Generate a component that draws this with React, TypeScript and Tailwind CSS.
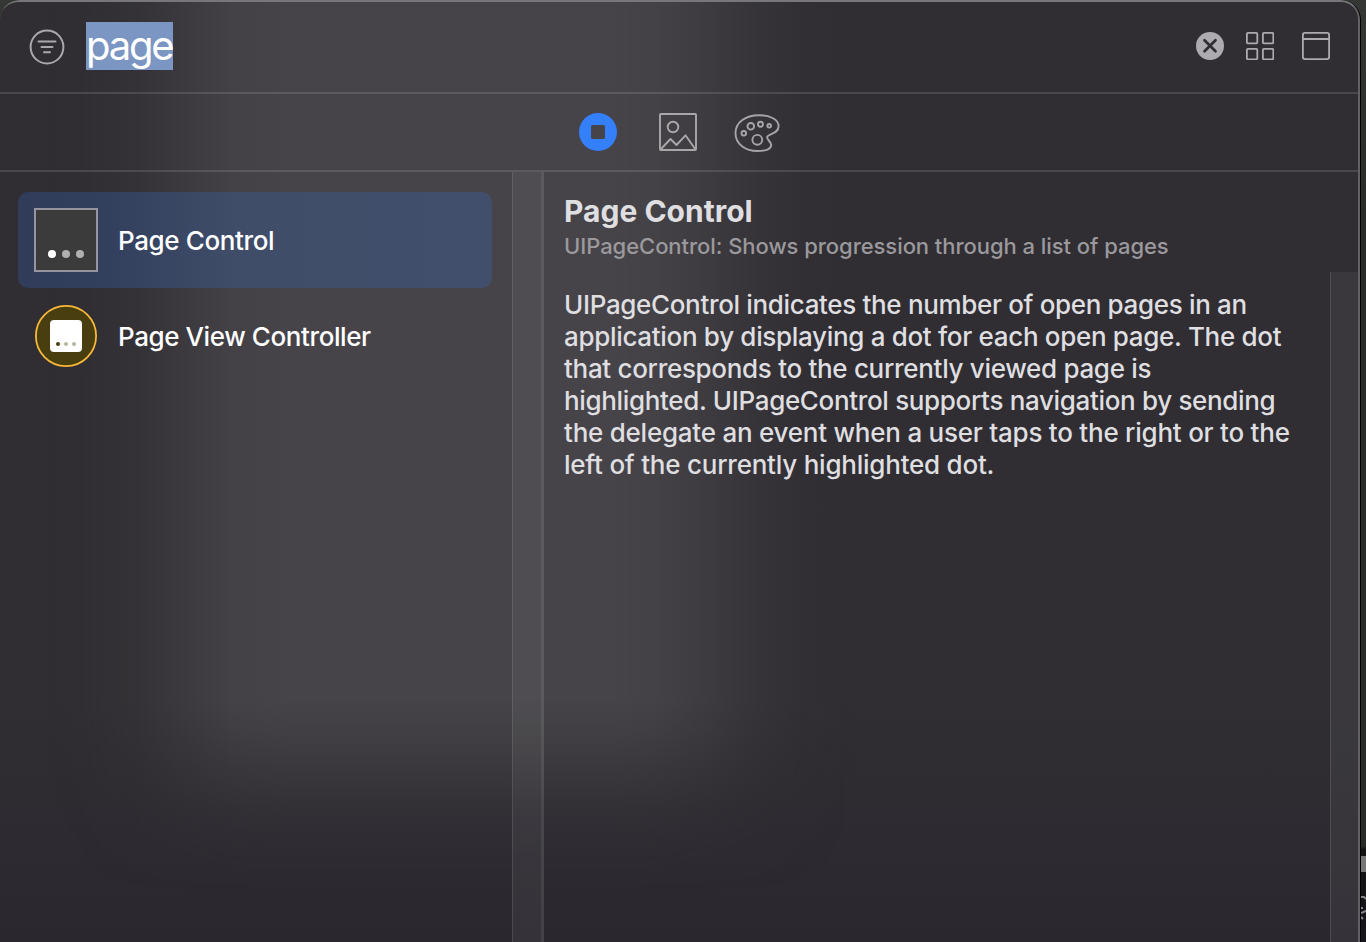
import React from "react";

function FilterIcon() {
  return (
    <svg width="36" height="36" viewBox="0 0 36 36" fill="none" stroke="#aaa8ac" strokeWidth="2" strokeLinecap="round">
      <circle cx="18" cy="18" r="16.4" />
      <path d="M9.5 12.5h17M12.5 18h11M15 23.3h6" />
    </svg>
  );
}

function ClearIcon() {
  return (
    <svg width="28" height="28" viewBox="0 0 28 28">
      <circle cx="14" cy="14" r="14" fill="#adabb0" />
      <path d="M8.5 8.2l11 11M19.5 8.2l-11 11" stroke="#302e33" strokeWidth="2.7" strokeLinecap="round" />
    </svg>
  );
}

function GridIcon() {
  return (
    <svg width="28" height="28" viewBox="0 0 28 28" fill="none" stroke="#adabb0" strokeWidth="1.8">
      <rect x="0.9" y="0.9" width="10.4" height="10.4" rx="1" />
      <rect x="16.9" y="0.9" width="10.4" height="10.4" rx="1" />
      <rect x="0.9" y="16.9" width="10.4" height="10.4" rx="1" />
      <rect x="16.9" y="16.9" width="10.4" height="10.4" rx="1" />
    </svg>
  );
}

function PanelIcon() {
  return (
    <svg width="28" height="28" viewBox="0 0 28 28" fill="none" stroke="#adabb0" strokeWidth="1.8">
      <rect x="0.9" y="0.9" width="26.2" height="26.2" rx="2" />
      <path d="M1 7h26" />
    </svg>
  );
}

function ObjectsIcon() {
  return (
    <svg width="38" height="38" viewBox="0 0 38 38">
      <path fill="#347ffa" fillRule="evenodd" d="M19 0a19 19 0 1 1 0 38a19 19 0 0 1 0-38zM13.5 12a1.5 1.5 0 0 0-1.5 1.5v11a1.5 1.5 0 0 0 1.5 1.5h11a1.5 1.5 0 0 0 1.5-1.5v-11a1.5 1.5 0 0 0-1.5-1.5z" />
    </svg>
  );
}

function ImageIcon() {
  return (
    <svg width="38" height="38" viewBox="0 0 38 38" fill="none" stroke="#a9a7aa" strokeWidth="1.9" strokeLinejoin="round">
      <rect x="1" y="1" width="36" height="36" rx="0.8" />
      <circle cx="14" cy="14" r="5.3" />
      <path d="M1.5 36.5L11.5 26L17.5 32L26.5 22.3L36.5 36.5" />
    </svg>
  );
}

function PaletteIcon() {
  return (
    <svg width="46" height="38" viewBox="0 0 46 38" fill="none" stroke="#a6a4a8" strokeWidth="1.9">
      <path d="M25 1.2C11 1.2 1.5 8.5 1.5 19.2C1.5 30 11.5 37 23.5 37C31.5 37 37.4 35.2 37.2 30.8C37 27.5 33 26 33.1 23.3C33.3 19.4 44.6 20.5 44.6 12.3C44.6 5 35.2 1.2 25 1.2Z" />
      <circle cx="9.8" cy="19.3" r="2.3" />
      <circle cx="16.8" cy="12.3" r="3.3" />
      <circle cx="26.5" cy="10.2" r="2.5" />
      <circle cx="35.2" cy="11.8" r="1.8" />
      <circle cx="23.3" cy="25.8" r="4.9" />
    </svg>
  );
}

function PageControlIcon() {
  return (
    <div className="flex h-16 w-16 items-end justify-center gap-1.5 border-2 border-[#9695a0] bg-[#3b3b3c] pb-3">
      <span className="h-2 w-2 rounded-full bg-white" />
      <span className="h-2 w-2 rounded-full bg-[#b0b0b1]" />
      <span className="h-2 w-2 rounded-full bg-[#b0b0b1]" />
    </div>
  );
}

function PageViewControllerIcon() {
  return (
    <svg width="64" height="64" viewBox="0 0 64 64">
      <circle cx="32" cy="32" r="30.1" fill="#483e10" stroke="#f8b93a" strokeWidth="1.8" />
      <rect x="16" y="16" width="32" height="32" rx="4" fill="#fff" />
      <circle cx="24" cy="40" r="2" fill="#483e10" />
      <circle cx="32" cy="40" r="2" fill="#b9b5a2" />
      <circle cx="40" cy="40" r="2" fill="#b9b5a2" />
    </svg>
  );
}

export default function App() {
  return (
    <div className="relative flex h-[942px] w-[1366px] overflow-hidden bg-[linear-gradient(#353735,#292b29_220px,#292b29_846px,#111_850px,#17161c)] font-['Inter',sans-serif]">
      <div className="relative flex w-[1361px] shrink-0 flex-col overflow-hidden rounded-t-[20px] border-r border-black bg-[linear-gradient(#302e33,#302e32_700px,#2d2a31_850px,#2a272f)]">
        <div className="absolute inset-0 bg-[linear-gradient(90deg,transparent_45px,#46444805_80px,#46444830_135px,#464448a0_195px,#464448e8_235px,#464448_285px,#464448_615px,#464448e8_655px,#464448a0_705px,#46444850_750px,#46444815_800px,transparent_850px)] [mask-image:linear-gradient(black_660px,#000f_700px,#000c_732px,#0008_765px,#0003_810px,#0001_850px,transparent_890px)]" />
        <header className="relative flex h-[94px] shrink-0 items-center border-b-2 border-white/12 pr-[30px] pl-[29px]">
          <span className="pt-0.5"><FilterIcon /></span>
          <div className="ml-[21px] flex h-12 w-[87px] items-center bg-[#7b96c3] text-[40px] leading-[48px] tracking-[-2.2px] whitespace-nowrap text-white">page</div>
          <div className="ml-auto flex items-center">
            <ClearIcon />
            <span className="ml-[22px]"><GridIcon /></span>
            <span className="ml-7"><PanelIcon /></span>
          </div>
        </header>
        <nav className="relative flex h-[78px] shrink-0 items-center border-b-2 border-white/12 pl-[579px]">
          <ObjectsIcon />
          <span className="ml-[42px]"><ImageIcon /></span>
          <span className="ml-[37px] pt-0.5"><PaletteIcon /></span>
        </nav>
        <main className="relative flex min-h-0 flex-1">
          <aside className="w-[512px] shrink-0 pt-5 pl-[18px] text-[26px] font-medium text-white">
            <div className="flex h-24 w-[474px] items-center gap-5 rounded-[10px] bg-[linear-gradient(90deg,#303c5a,#32405d_90px,#404d69_220px,#424f6c)] pl-4">
              <PageControlIcon />
              <span className="tracking-[-0.38px]">Page Control</span>
            </div>
            <div className="flex h-24 w-[474px] items-center gap-5 pl-4">
              <PageViewControllerIcon />
              <span className="tracking-[-0.41px]">Page View Controller</span>
            </div>
          </aside>
          <div className="w-8 shrink-0 border-r-[3px] border-l border-white/10 border-r-white/7 bg-white/5" />
          <article className="flex-1 pl-5">
            <h1 className="pt-[19px] text-[30px] leading-10 font-bold tracking-[0px] text-[#dfdee0]">Page Control</h1>
            <p className="text-[22px] leading-[30px] font-medium tracking-[-0.05px] whitespace-nowrap text-[#9b999d]">UIPageControl: Shows progression through a list of pages</p>
            <p className="pt-[28px] text-[26px] leading-8 font-medium whitespace-nowrap text-[#dfdee0]">
              <span className="tracking-[-0.34px]">UIPageControl indicates the number of open pages in an</span><br />
              <span className="tracking-[-0.32px]">application by displaying a dot for each open page. The dot</span><br />
              <span className="tracking-[-0.31px]">that corresponds to the currently viewed page is</span><br />
              <span className="tracking-[-0.34px]">highlighted. UIPageControl supports navigation by sending</span><br />
              <span className="tracking-[-0.24px]">the delegate an event when a user taps to the right or to the</span><br />
              <span className="tracking-[-0.23px]">left of the currently highlighted dot.</span>
            </p>
          </article>
          <div className="mt-[100px] w-[30px] shrink-0 border-l border-white/12 bg-white/5" />
        </main>
        <div className="pointer-events-none absolute inset-0 rounded-t-[19px] border-t-2 border-r-2 border-t-[#77767a] border-r-[#626065]" />
      </div>
      <div className="flex flex-1 flex-col pt-[856px]">
        <span className="h-4 bg-[#777]" />
        <svg className="mt-6" width="5" height="26" viewBox="0 0 5 26" fill="none" stroke="#858489" strokeWidth="2">
          <path d="M0 1h3l2 2M0 12h2M0 17l5-2M0 21l2 2" />
        </svg>
      </div>
    </div>
  );
}
